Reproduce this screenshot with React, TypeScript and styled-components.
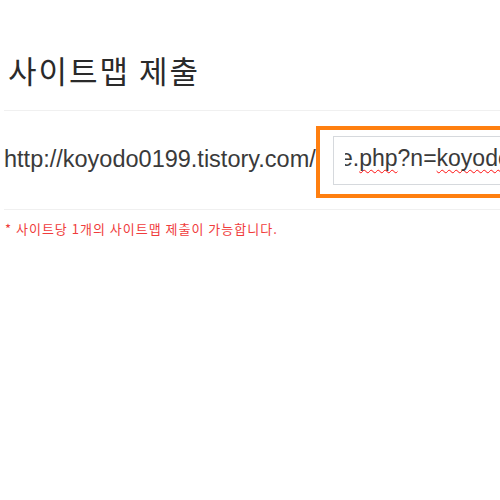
import React from 'react';
import styled, { createGlobalStyle } from 'styled-components';

const GlobalStyle = createGlobalStyle`
  html, body {
    margin: 0;
    padding: 0;
    background: #fff;
  }
`;

const App = () => {
  return (
    <>
      <GlobalStyle />
      <Page>
        <Header>
          <Title>사이트맵 제출</Title>
        </Header>
        <SubmitRow>
          <BaseUrl>http://koyodo0199.tistory.com/</BaseUrl>
          <Highlight>
            <InputBox>
              <InputClip>
                <InputText>
                  e.<Misspelled>php</Misspelled>?n=<Misspelled>koyodo0199</Misspelled>
                </InputText>
              </InputClip>
            </InputBox>
          </Highlight>
        </SubmitRow>
        <Notice>* 사이트당 1개의 사이트맵 제출이 가능합니다.</Notice>
      </Page>
    </>
  );
};

const Page = styled.div`
  width: 500px;
  height: 500px;
  overflow: hidden;
  padding-left: 4px;
  box-sizing: border-box;
  background: #fff;
`;

const Header = styled.div`
  padding: 52px 0 22px 4px;
  border-bottom: 1px solid #f0f0f0;
`;

const Title = styled.h1`
  margin: 0;
  font-family: "Noto Sans CJK KR", "Noto Sans", sans-serif;
  font-size: 31px;
  font-weight: 400;
  line-height: 36px;
  color: #2a2a2a;
  letter-spacing: 2px;
`;

const SubmitRow = styled.div`
  display: flex;
  align-items: center;
  padding: 15px 0 11px 0;
  border-bottom: 1px solid #f0f0f0;
`;

const BaseUrl = styled.span`
  flex: none;
  width: 312px;
  font-family: "Liberation Sans", Arial, sans-serif;
  font-size: 23.5px;
  color: #3a3a3a;
  white-space: nowrap;
  margin-top: -5px;
`;

const Highlight = styled.div`
  flex: none;
  width: 220px;
  height: 72px;
  box-sizing: border-box;
  border: 4px solid #ff7f10;
  padding: 6px 0 0 13px;
`;

const InputBox = styled.div`
  height: 49px;
  box-sizing: border-box;
  border: 1px solid #d6d9dd;
  padding: 0 0 0 11px;
  display: flex;
  align-items: center;
`;

const InputClip = styled.div`
  flex: 1;
  overflow: hidden;
  white-space: nowrap;
  padding-bottom: 4px;
`;

const InputText = styled.span`
  display: inline-block;
  margin-left: -5px;
  font-family: "Liberation Sans", Arial, sans-serif;
  font-size: 23px;
  color: #3a3a3a;
`;

const Misspelled = styled.span`
  text-decoration-line: underline;
  text-decoration-style: wavy;
  text-decoration-color: #ff1010;
  text-decoration-thickness: 1px;
  text-decoration-skip-ink: none;
  text-underline-offset: 3px;
`;

const Notice = styled.p`
  margin: 10px 0 0 1px;
  font-family: "Noto Sans CJK KR", "Noto Sans", sans-serif;
  font-size: 13px;
  line-height: 18px;
  letter-spacing: 1px;
  color: #f03c3c;
`;

export default App;
